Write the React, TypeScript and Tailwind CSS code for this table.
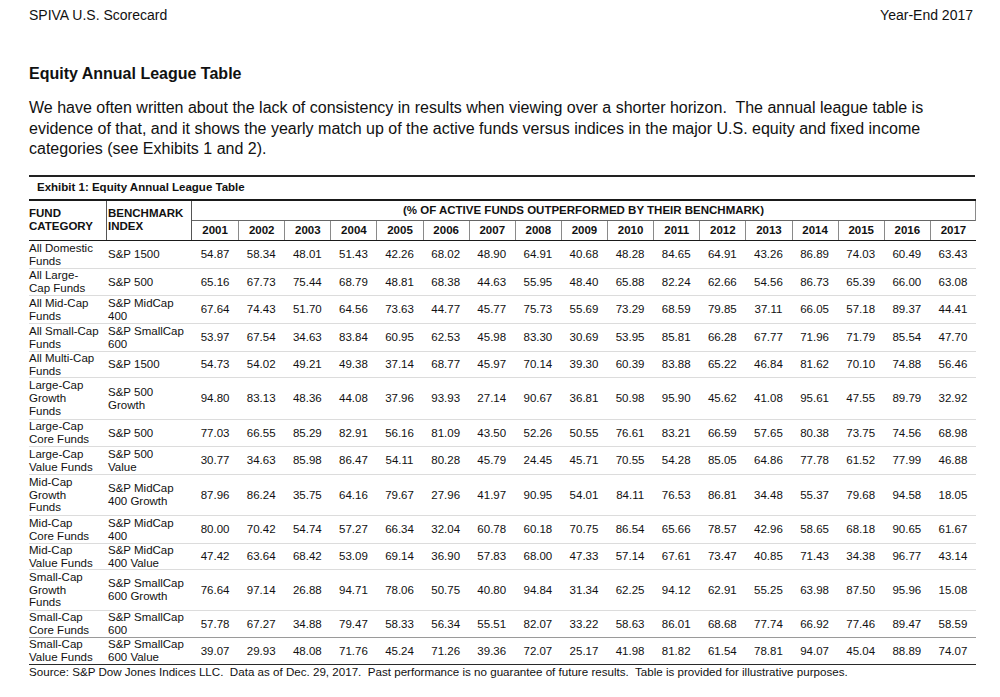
const years = Array.from({ length: 17 }, (_, i) => String(2001 + i));

type Row = { fund: string[]; index: string[]; values: string; h: string; line?: string };

const rows: Row[] = [
  { fund: ["All Domestic", "Funds"], index: ["S&P 1500"], h: "h-[28px]", values: "54.87 58.34 48.01 51.43 42.26 68.02 48.90 64.91 40.68 48.28 84.65 64.91 43.26 86.89 74.03 60.49 63.43" },
  { fund: ["All Large-", "Cap Funds"], index: ["S&P 500"], h: "h-[27px]", values: "65.16 67.73 75.44 68.79 48.81 68.38 44.63 55.95 48.40 65.88 82.24 62.66 54.56 86.73 65.39 66.00 63.08" },
  { fund: ["All Mid-Cap", "Funds"], index: ["S&P MidCap", "400"], h: "h-[28px]", values: "67.64 74.43 51.70 64.56 73.63 44.77 45.77 75.73 55.69 73.29 68.59 79.85 37.11 66.05 57.18 89.37 44.41" },
  { fund: ["All Small-Cap", "Funds"], index: ["S&P SmallCap", "600"], h: "h-[28px]", values: "53.97 67.54 34.63 83.84 60.95 62.53 45.98 83.30 30.69 53.95 85.81 66.28 67.77 71.96 71.79 85.54 47.70" },
  { fund: ["All Multi-Cap", "Funds"], index: ["S&P 1500"], h: "h-[26px]", values: "54.73 54.02 49.21 49.38 37.14 68.77 45.97 70.14 39.30 60.39 83.88 65.22 46.84 81.62 70.10 74.88 56.46" },
  { fund: ["Large-Cap", "Growth", "Funds"], index: ["S&P 500", "Growth"], h: "h-[42px]", values: "94.80 83.13 48.36 44.08 37.96 93.93 27.14 90.67 36.81 50.98 95.90 45.62 41.08 95.61 47.55 89.79 32.92" },
  { fund: ["Large-Cap", "Core Funds"], index: ["S&P 500"], h: "h-[27px]", values: "77.03 66.55 85.29 82.91 56.16 81.09 43.50 52.26 50.55 76.61 83.21 66.59 57.65 80.38 73.75 74.56 68.98" },
  { fund: ["Large-Cap", "Value Funds"], index: ["S&P 500", "Value"], h: "h-[28px]", values: "30.77 34.63 85.98 86.47 54.11 80.28 45.79 24.45 45.71 70.55 54.28 85.05 64.86 77.78 61.52 77.99 46.88" },
  { fund: ["Mid-Cap", "Growth", "Funds"], index: ["S&P MidCap", "400 Growth"], h: "h-[41px]", values: "87.96 86.24 35.75 64.16 79.67 27.96 41.97 90.95 54.01 84.11 76.53 86.81 34.48 55.37 79.68 94.58 18.05" },
  { fund: ["Mid-Cap", "Core Funds"], index: ["S&P MidCap", "400"], h: "h-[28px]", values: "80.00 70.42 54.74 57.27 66.34 32.04 60.78 60.18 70.75 86.54 65.66 78.57 42.96 58.65 68.18 90.65 61.67" },
  { fund: ["Mid-Cap", "Value Funds"], index: ["S&P MidCap", "400 Value"], h: "h-[26px]", values: "47.42 63.64 68.42 53.09 69.14 36.90 57.83 68.00 47.33 57.14 67.61 73.47 40.85 71.43 34.38 96.77 43.14" },
  { fund: ["Small-Cap", "Growth", "Funds"], index: ["S&P SmallCap", "600 Growth"], h: "h-[41px]", values: "76.64 97.14 26.88 94.71 78.06 50.75 40.80 94.84 31.34 62.25 94.12 62.91 55.25 63.98 87.50 95.96 15.08" },
  { fund: ["Small-Cap", "Core Funds"], index: ["S&P SmallCap", "600"], h: "h-[27px]", line: "border-[#9a9a9a]", values: "57.78 67.27 34.88 79.47 58.33 56.34 55.51 82.07 33.22 58.63 86.01 68.68 77.74 66.92 77.46 89.47 58.59" },
  { fund: ["Small-Cap", "Value Funds"], index: ["S&P SmallCap", "600 Value"], h: "h-[27px]", line: "border-[#2a2a2a]", values: "39.07 29.93 48.08 71.76 45.24 71.26 39.36 72.07 25.17 41.98 81.82 61.54 78.81 94.07 45.04 88.89 74.07" },
];

const cols = "grid grid-cols-[78px_85px_repeat(17,minmax(0,1fr))]";

export default function App() {
  return (
    <div className="h-[697px] w-[1000px] overflow-hidden bg-white pl-[29px] pt-[7px] font-['Liberation_Sans',Arial,sans-serif] text-[#111]">
      <div className="flex w-[944px] justify-between text-[14px] leading-[16px]">
        <span>SPIVA U.S. Scorecard</span>
        <span>Year-End 2017</span>
      </div>

      <h1 className="mt-[41px] text-[16px] leading-[19px] font-bold">Equity Annual League Table</h1>

      <p className="mt-[15px] text-[16px] leading-[20.5px] whitespace-pre">
        {"We have often written about the lack of consistency in results when viewing over a shorter horizon.  The annual league table is\nevidence of that, and it shows the yearly match up of the active funds versus indices in the major U.S. equity and fixed income\ncategories (see Exhibits 1 and 2)."}
      </p>

      <div className="mt-[15px] h-[2px] w-[946px] bg-[#222]" />

      <div className="mt-[3px] pl-[8px] text-[11.5px] leading-[14px] font-bold">Exhibit 1: Equity Annual League Table</div>

      <div className="mt-[5px] w-[947px] text-[11.5px] leading-[12.8px]">
        {/* header */}
        <div className={`${cols} border-t-2 border-b-[1.5px] border-[#1a1a1a]`}>
          <div className="flex items-center border-r border-[#555] font-bold">
            FUND
            <br />
            CATEGORY
          </div>
          <div className="flex items-center border-r border-[#555] pl-px font-bold">
            BENCHMARK
            <br />
            INDEX
          </div>
          <div className="col-span-17 flex flex-col">
            <div className="flex h-[20px] items-center justify-center border-r border-b border-[#8a8a8a] border-b-[#666] font-bold">
              (% OF ACTIVE FUNDS OUTPERFORMED BY THEIR BENCHMARK)
            </div>
            <div className="grid h-[19.5px] grid-cols-[repeat(17,minmax(0,1fr))]">
              {years.map((y, i) => (
                <div
                  key={y}
                  className={`flex items-center justify-center font-bold ${i > 0 ? "border-l border-[#8a8a8a]" : ""}`}
                >
                  {y}
                </div>
              ))}
            </div>
          </div>
        </div>

        {/* data rows */}
        {rows.map((r) => (
          <div
            key={r.fund.join(" ")}
            className={`${cols} border-b-[1.5px] ${r.line ?? "border-[#dcdcdc]"} ${r.h}`}
          >
            <div className="flex flex-col justify-center whitespace-nowrap">
              {r.fund.map((l) => (
                <span key={l}>{l}</span>
              ))}
            </div>
            <div className="flex flex-col justify-center pl-px whitespace-nowrap">
              {r.index.map((l) => (
                <span key={l}>{l}</span>
              ))}
            </div>
            {r.values.split(" ").map((v, i) => (
              <div key={i} className="flex items-center justify-center">
                {v}
              </div>
            ))}
          </div>
        ))}
      </div>

      <div className="text-[11.6px] leading-[14px] whitespace-pre">
        {"Source: S&P Dow Jones Indices LLC.  Data as of Dec. 29, 2017.  Past performance is no guarantee of future results.  Table is provided for illustrative purposes."}
      </div>
    </div>
  );
}
